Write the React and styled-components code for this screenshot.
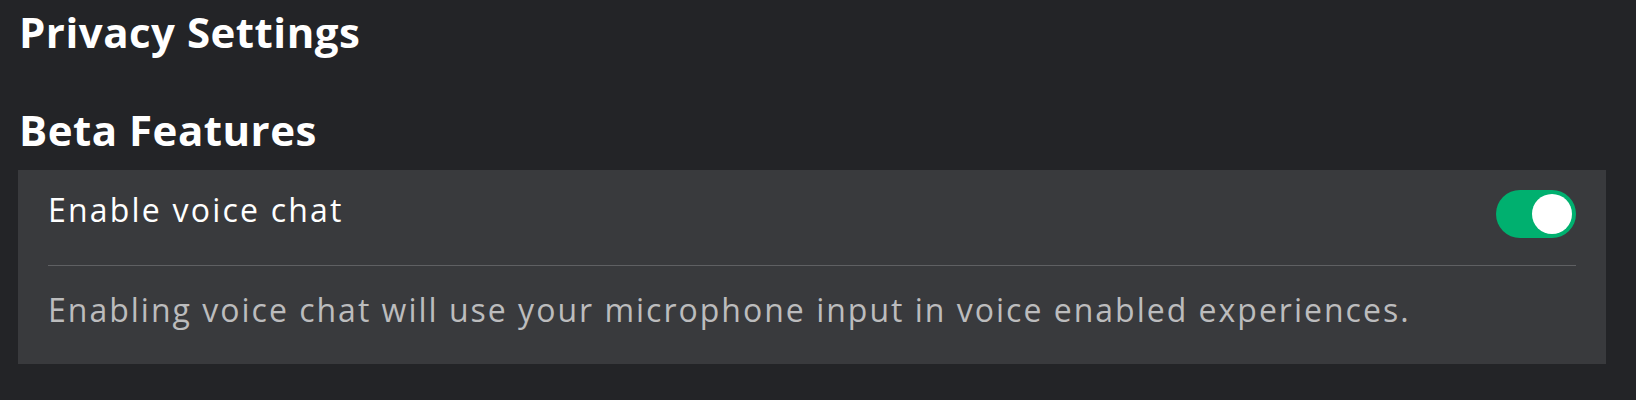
import React, { useState } from 'react';
import styled, { createGlobalStyle } from 'styled-components';

const GlobalStyle = createGlobalStyle`
  html, body {
    margin: 0;
    background: #232427;
  }
  body {
    font-family: "Open Sans", "Liberation Sans", sans-serif;
    color: #ffffff;
  }
`

const Page = styled.div`
  padding: 7px 30px 40px 18px;
  min-height: 400px;
  box-sizing: border-box;
`

const SectionTitle = styled.h2`
  margin: 0 0 ${props => props.gap}px 0;
  padding-left: 1px;
  font-size: 42px;
  line-height: 50px;
  font-weight: 700;
  letter-spacing: 0.5px;
  color: #ffffff;
`

const Card = styled.div`
  background: #393a3d;
  padding: 20px 30px 34px 30px;
`

const Row = styled.div`
  display: flex;
  justify-content: space-between;
  align-items: flex-start;
`

const Label = styled.span`
  font-size: 32px;
  line-height: 40px;
  letter-spacing: 2.2px;
  color: #ffffff;
`

const Switch = styled.button`
  width: 80px;
  height: 48px;
  border: none;
  border-radius: 24px;
  padding: 4px;
  background: ${props => (props.on ? '#00b06f' : '#6b6c6f')};
  display: flex;
  justify-content: ${props => (props.on ? 'flex-end' : 'flex-start')};
  cursor: pointer;
`

const Knob = styled.span`
  width: 40px;
  height: 40px;
  border-radius: 50%;
  background: #ffffff;
`

const Divider = styled.hr`
  margin: 27px 0 24px 0;
  border: none;
  height: 1px;
  background: #5f6063;
`

const Description = styled.p`
  margin: 0;
  font-size: 32px;
  line-height: 40px;
  letter-spacing: 2px;
  color: #bcbcbd;
`

export default function App() {
  const [voice, setVoice] = useState(true);

  return (
    <Page>
      <GlobalStyle />
      <SectionTitle gap={48}>Privacy Settings</SectionTitle>
      <SectionTitle gap={15}>Beta Features</SectionTitle>
      <Card>
        <Row>
          <Label>Enable voice chat</Label>
          <Switch on={voice} onClick={() => setVoice(!voice)} aria-label="Enable voice chat">
            <Knob />
          </Switch>
        </Row>
        <Divider />
        <Description>
          Enabling voice chat will use your microphone input in voice enabled experiences.
        </Description>
      </Card>
    </Page>
  );
}
